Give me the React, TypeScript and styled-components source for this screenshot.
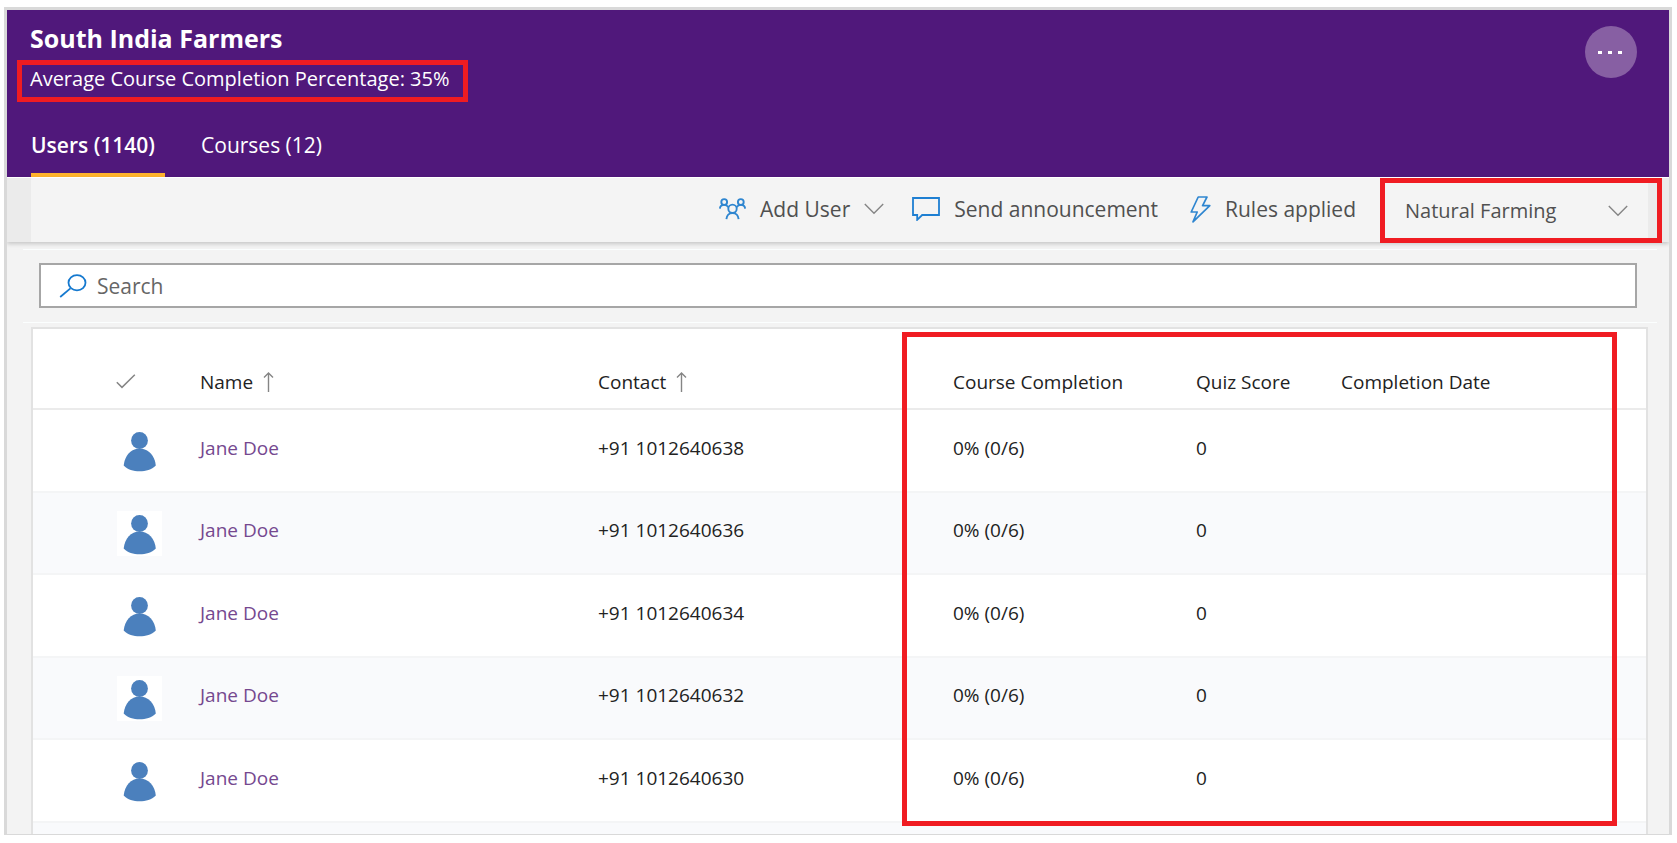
import React from "react";
import styled, { createGlobalStyle } from "styled-components";

const GlobalStyle = createGlobalStyle`
  *, *::before, *::after { box-sizing: border-box; }
  body {
    margin: 0;
    background: #fff;
    font-family: "Segoe UI", "Open Sans", "Noto Sans", sans-serif;
    color: #222;
  }
  button, input, select { font-family: inherit; }
`;

const Frame = styled.main`
  height: calc(100vh - 15px);
  margin: 7px 5px 8px 4px;
  border: 3px solid #d9d9d9;
  border-bottom-width: 1px;
  background: #f3f3f3;
  overflow: hidden;
`;

const Header = styled.header`
  display: flex;
  justify-content: space-between;
  align-items: flex-start;
  height: 167px;
  padding: 0 32px 0 10px;
  background: #50187b;
  color: #fff;
`;

const Heading = styled.div`
  display: flex;
  flex-direction: column;
  align-items: flex-start;
`;

const Title = styled.h1`
  margin: 12px 0 6px;
  padding-left: 13px;
  font-size: 25px;
  line-height: 32px;
  font-weight: 700;
`;

const Average = styled.p`
  height: 42px;
  margin: 0;
  padding: 0 13px 0 8px;
  border: 5px solid #f01c22;
  font-size: 20px;
  line-height: 28px;
  font-weight: 500;
  white-space: nowrap;
`;

const Tabs = styled.nav`
  display: flex;
  gap: 36px;
  margin-top: 21px;
  padding-left: 14px;
`;

const Tab = styled.button<{ $active?: boolean }>`
  height: 54px;
  padding: 0 10px 6px 0;
  border: 0;
  border-bottom: 4px solid ${(p) => (p.$active ? "#ffb32c" : "transparent")};
  background: none;
  color: #fff;
  font-size: 21px;
  line-height: 28px;
  font-weight: ${(p) => (p.$active ? 600 : 400)};
  cursor: pointer;
`;

const MoreButton = styled.button`
  display: flex;
  align-items: center;
  justify-content: center;
  width: 52px;
  height: 52px;
  margin-top: 16px;
  padding: 0;
  border: 0;
  border-radius: 50%;
  background: #875fa3;
  cursor: pointer;
`;

const Toolbar = styled.div`
  position: relative;
  display: flex;
  justify-content: flex-end;
  align-items: flex-start;
  height: 65px;
  padding: 0 21px 0 24px;
  border-top: 1px solid #fff;
  background: linear-gradient(#f4f4f4, #f4f4f4) content-box, #ebebeb;
  box-shadow: 0 2px 4px rgba(0, 0, 0, 0.18);
`;

const Command = styled.button<{ $after: number }>`
  display: flex;
  align-items: center;
  gap: 14px;
  height: 62px;
  margin-right: ${(p) => p.$after}px;
  padding: 0;
  border: 0;
  background: none;
  color: #505050;
  font-size: 21px;
  line-height: 28px;
  cursor: pointer;
`;

const CourseFilter = styled.label`
  position: relative;
  display: flex;
  align-items: center;
  width: 282px;
  height: 65px;
  margin-right: -14px;
  border: 5px solid #f01c22;
`;

const CourseSelect = styled.select`
  width: 100%;
  height: 100%;
  padding: 0 48px 0 20px;
  border: 0;
  appearance: none;
  background: transparent;
  color: #505050;
  font-size: 20px;
  cursor: pointer;
`;

const FilterChevron = styled.span`
  position: absolute;
  right: 29px;
  display: flex;
  pointer-events: none;
`;

const SearchArea = styled.div`
  margin: 7px 12px 4px 16px;
  padding: 13px 20px 14px 16px;
  border: 1px solid #fbfefe;
  border-width: 1px 0;
`;

const SearchBox = styled.label`
  display: flex;
  align-items: center;
  gap: 10px;
  height: 45px;
  padding-left: 18px;
  border: 2px solid #a6a6a6;
  background: #fff;
`;

const SearchInput = styled.input`
  flex: 1;
  min-width: 0;
  padding: 0;
  border: 0;
  outline: 0;
  background: none;
  font-size: 21px;
  line-height: 28px;
  &::placeholder { color: #666; opacity: 1; }
`;

const Card = styled.section`
  position: relative;
  margin: 0 21px 0 24px;
  border: 2px solid #e2e2e2;
  background: #fff;
`;

const Highlight = styled.div`
  position: absolute;
  top: 3px;
  left: 869px;
  right: 29px;
  height: 494px;
  border: 5px solid #f01c22;
  pointer-events: none;
`;

const Table = styled.table`
  width: 100%;
  table-layout: fixed;
  border-collapse: collapse;
  text-align: left;
`;

const Column = styled.col<{ $width?: number }>`
  width: ${(p) => (p.$width ? `${p.$width}px` : "auto")};
`;

const HeadCell = styled.th`
  height: 80px;
  padding: 26px 0 0;
  border-bottom: 2px solid #ebebeb;
  font-size: 19px;
  line-height: 28px;
  font-weight: 500;
  white-space: nowrap;
`;

const SortLabel = styled.span`
  display: flex;
  align-items: center;
  gap: 10px;
`;

const SelectMark = styled.span`
  display: flex;
  padding-left: 83px;
`;

const Row = styled.tr`
  height: 83px;
  border-bottom: 2px solid #f4f5f6;
  &:nth-child(even) {
    height: 82px;
    background: #f9fafc;
  }
`;

const Cell = styled.td`
  padding: 0 0 6px;
  font-size: 19px;
  line-height: 28px;
  white-space: nowrap;
`;

const AvatarCell = styled.td`
  padding: 0 0 0 84px;
`;

const Avatar = styled.span`
  display: block;
  width: 45px;
  height: 45px;
  background: #fff;
`;

const NameLink = styled.a`
  color: #75488f;
  text-decoration: none;
`;

const Chevron = () => (
  <svg width="20" height="12" viewBox="0 0 20 12" fill="none" stroke="#858585" strokeWidth="1.4" aria-hidden="true">
    <path d="M0.8 1 10 10.2 19.2 1" />
  </svg>
);

const ArrowUp = () => (
  <svg width="11" height="20" viewBox="0 0 11 20" fill="none" stroke="#858585" strokeWidth="1.4" aria-hidden="true">
    <path d="M5.5 20V1.2M1 5.6 5.5 1.1 10 5.6" />
  </svg>
);

const PeopleIcon = () => (
  <svg width="27" height="22" viewBox="0 0 27 22" fill="none" stroke="#2f86d0" strokeWidth="1.9" aria-hidden="true">
    <circle cx="5.2" cy="4" r="2.9" />
    <circle cx="21.8" cy="4" r="2.9" />
    <circle cx="13.5" cy="10.8" r="4.2" />
    <path d="M0.9 10.6C1.1 8.4 2.8 6.9 5.2 6.9c1.9 0 3.2.8 4.2 2.2M26.1 10.6c-.2-2.2-1.9-3.7-4.3-3.7-1.9 0-3.2.8-4.2 2.2M7.4 21.2c.3-3.6 2.7-6.2 6.1-6.2s5.8 2.6 6.1 6.2" />
  </svg>
);

const CommentIcon = () => (
  <svg width="28" height="24" viewBox="0 0 28 24" fill="none" stroke="#1e7fd2" strokeWidth="1.8" aria-hidden="true">
    <path d="M1 1h26v17H10.2l-5 4.8V18H1z" />
  </svg>
);

const BoltIcon = () => (
  <svg width="21" height="27" viewBox="0 0 21 27" fill="none" stroke="#2f86d0" strokeWidth="1.7" strokeLinejoin="round" aria-hidden="true">
    <path d="M8.2 1H17L12.6 9.6H19.8L3 25.8 7.2 16H1.2z" />
  </svg>
);

const SearchIcon = () => (
  <svg width="28" height="24" viewBox="0 0 28 24" fill="none" stroke="#1579cf" strokeWidth="1.8" aria-hidden="true">
    <ellipse cx="18" cy="8.8" rx="8.5" ry="7.6" />
    <path d="M11.4 14.4 1.2 23" />
  </svg>
);

const CheckIcon = () => (
  <svg width="20" height="15" viewBox="0 0 20 15" fill="none" stroke="#858585" strokeWidth="1.5" aria-hidden="true">
    <path d="M0.8 8.2 6 13.4 18.8 0.8" />
  </svg>
);

const MoreIcon = () => (
  <svg width="26" height="5" viewBox="0 0 26 5" fill="#fff" aria-hidden="true">
    <path d="M0 1h4v3H0zM10 1h4v3h-4zM20 1h4v3h-4z" />
  </svg>
);

const PersonIcon = () => (
  <svg width="45" height="45" viewBox="0 0 45 45" fill="#4b80bd" aria-hidden="true">
    <circle cx="22.5" cy="12.5" r="8.4" />
    <path d="M6.7 37.5C7.6 27.5 14 20.4 22.6 20.4S38 27.5 38.8 37.5C34.5 41.6 29 43.3 22.6 43.3S10.8 41.6 6.7 37.5z" />
  </svg>
);

const contacts = ["+91 1012640638", "+91 1012640636", "+91 1012640634", "+91 1012640632", "+91 1012640630"];

export default function App() {
  return (
    <>
      <GlobalStyle />
      <Frame>
        <Header>
          <Heading>
            <Title>South India Farmers</Title>
            <Average>Average Course Completion Percentage: 35%</Average>
            <Tabs>
              <Tab $active>Users (1140)</Tab>
              <Tab>Courses (12)</Tab>
            </Tabs>
          </Heading>
          <MoreButton aria-label="More options">
            <MoreIcon />
          </MoreButton>
        </Header>
        <Toolbar>
          <Command $after={28}>
            <PeopleIcon />
            Add User
            <Chevron />
          </Command>
          <Command $after={32}>
            <CommentIcon />
            Send announcement
          </Command>
          <Command $after={24}>
            <BoltIcon />
            Rules applied
          </Command>
          <CourseFilter>
            <CourseSelect aria-label="Course" defaultValue="natural">
              <option value="natural">Natural Farming</option>
            </CourseSelect>
            <FilterChevron>
              <Chevron />
            </FilterChevron>
          </CourseFilter>
        </Toolbar>
        <SearchArea>
          <SearchBox>
            <SearchIcon />
            <SearchInput type="search" placeholder="Search" aria-label="Search" />
          </SearchBox>
        </SearchArea>
        <Card>
          <Table>
            <colgroup>
              <Column $width={167} />
              <Column $width={398} />
              <Column $width={355} />
              <Column $width={243} />
              <Column $width={145} />
              <Column />
            </colgroup>
            <thead>
              <tr>
                <HeadCell aria-label="Selected">
                  <SelectMark>
                    <CheckIcon />
                  </SelectMark>
                </HeadCell>
                <HeadCell>
                  <SortLabel>
                    Name <ArrowUp />
                  </SortLabel>
                </HeadCell>
                <HeadCell>
                  <SortLabel>
                    Contact <ArrowUp />
                  </SortLabel>
                </HeadCell>
                <HeadCell>Course Completion</HeadCell>
                <HeadCell>Quiz Score</HeadCell>
                <HeadCell>Completion Date</HeadCell>
              </tr>
            </thead>
            <tbody>
              {contacts.map((contact) => (
                <Row key={contact}>
                  <AvatarCell>
                    <Avatar>
                      <PersonIcon />
                    </Avatar>
                  </AvatarCell>
                  <Cell>
                    <NameLink href="#user">Jane Doe</NameLink>
                  </Cell>
                  <Cell>{contact}</Cell>
                  <Cell>0% (0/6)</Cell>
                  <Cell>0</Cell>
                  <Cell />
                </Row>
              ))}
              <Row>
                <Cell colSpan={6} />
              </Row>
            </tbody>
          </Table>
          <Highlight />
        </Card>
      </Frame>
    </>
  );
}
